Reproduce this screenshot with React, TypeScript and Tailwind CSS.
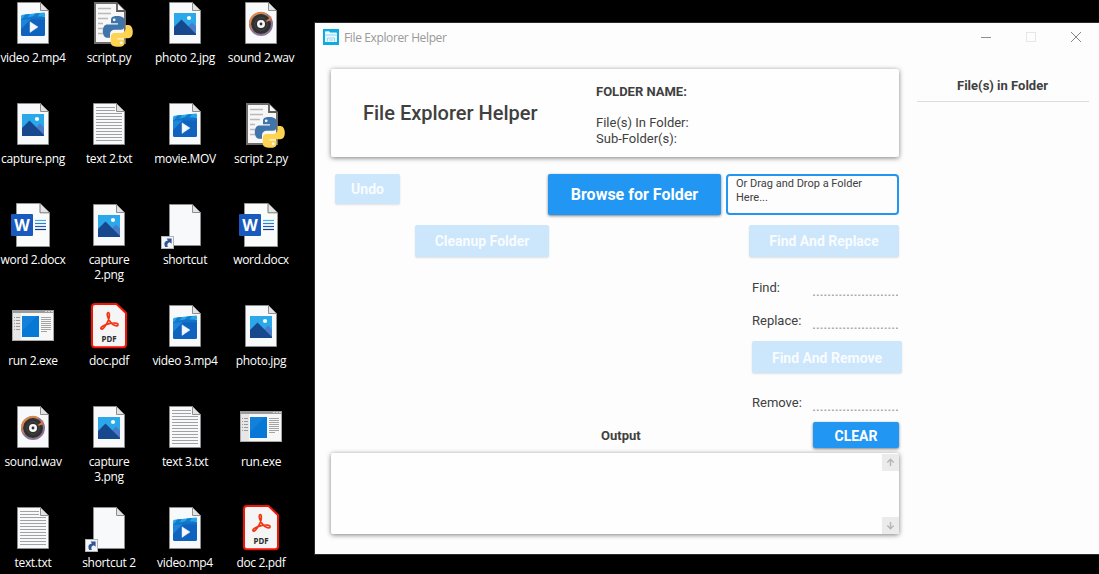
import React from "react";

type Kind = "video" | "python" | "image" | "sound" | "text" | "word" | "shortcut" | "exe" | "pdf";

const files: { kind: Kind; lines: string[] }[] = [
  { kind: "video", lines: ["video 2.mp4"] },
  { kind: "python", lines: ["script.py"] },
  { kind: "image", lines: ["photo 2.jpg"] },
  { kind: "sound", lines: ["sound 2.wav"] },
  { kind: "image", lines: ["capture.png"] },
  { kind: "text", lines: ["text 2.txt"] },
  { kind: "video", lines: ["movie.MOV"] },
  { kind: "python", lines: ["script 2.py"] },
  { kind: "word", lines: ["word 2.docx"] },
  { kind: "image", lines: ["capture", "2.png"] },
  { kind: "shortcut", lines: ["shortcut"] },
  { kind: "word", lines: ["word.docx"] },
  { kind: "exe", lines: ["run 2.exe"] },
  { kind: "pdf", lines: ["doc.pdf"] },
  { kind: "video", lines: ["video 3.mp4"] },
  { kind: "image", lines: ["photo.jpg"] },
  { kind: "sound", lines: ["sound.wav"] },
  { kind: "image", lines: ["capture", "3.png"] },
  { kind: "text", lines: ["text 3.txt"] },
  { kind: "exe", lines: ["run.exe"] },
  { kind: "text", lines: ["text.txt"] },
  { kind: "shortcut", lines: ["shortcut 2"] },
  { kind: "video", lines: ["video.mp4"] },
  { kind: "pdf", lines: ["doc 2.pdf"] },
];

function Page() {
  return (
    <g>
      <path d="M8.5 3.5H31.5L39.5 12V44.5H8.5Z" fill="#f8f9fa" stroke="#8e8e8e" />
      <path d="M31.5 3.5V11.5H39.5Z" fill="#e2e2e3" stroke="#8e8e8e" />
    </g>
  );
}

function Art({ kind }: { kind: Kind }) {
  switch (kind) {
    case "video":
      return (
        <g>
          <Page />
          <path d="M12 17.5Q12 16 13.5 15.8L35 13.6Q36 13.6 36 14.5V17.5L12 20.5Z" fill="#2aa4ea" />
          <path d="M16 15.6L21 15L18 19.8L13 20.4ZM26 14.5L31 14L28 18.5L23 19Z" fill="#0f7fd0" />
          <path d="M12 20L36 18V35.5Q36 37 34.5 37H13.5Q12 37 12 35.5Z" fill="#0f62bd" />
          <path d="M12 20.5L23 19L12 30Z" fill="#1e86d9" />
          <path d="M12 20.3L23 17.6H35Q36 17.6 36 18.6V20.5H14Z" fill="#1273ca" />
          <path d="M21 22.8L29 28L21 33.4Z" fill="#f4f8fc" stroke="#d9e7f5" strokeWidth=".5" />
        </g>
      );
    case "image":
      return (
        <g>
          <Page />
          <rect x="13" y="14" width="22" height="22" fill="#2ba8ea" />
          <path d="M24 31L31 23.5L35 27.5V36H24Z" fill="#4a7cc9" />
          <path d="M13 28L20.5 20.5L35 35V36H13Z" fill="#17478c" />
          <circle cx="28" cy="19" r="2.1" fill="#f5fbff" />
        </g>
      );
    case "text":
      return (
        <g>
          <Page />
          <path
            d="M11 7.5H30M11 10.5H30M11 13.5H37M11 16.5H37M11 19.5H37M11 22.5H37M11 25.5H37M11 28.5H37M11 31.5H37M11 34.5H37M11 37.5H37M11 40.5H37"
            stroke="#a2a2a2"
          />
        </g>
      );
    case "sound":
      return (
        <g>
          <Page />
          <circle cx="24" cy="25" r="11" fill="#303030" stroke="#8b7594" strokeWidth="2" />
          <path d="M13 25A11 11 0 0 1 29.5 15.4" fill="none" stroke="#de8844" strokeWidth="2" />
          <path d="M13 25A11 11 0 0 0 15 31" fill="none" stroke="#b87c69" strokeWidth="2" />
          <path d="M33.5 17.5L32 22M29 22.5L34 19.5" stroke="#d9783a" strokeWidth="2" />
          <circle cx="24" cy="25" r="6.3" fill="none" stroke="#4a4a4a" strokeWidth=".8" />
          <circle cx="24" cy="25" r="4" fill="#f7f7f7" />
          <circle cx="24" cy="25" r="1.4" fill="#333" />
        </g>
      );
    case "python":
      return (
        <g>
          <path d="M10 4H31.5L40 12.5V44H10Z" fill="#f7f7f7" stroke="#706c6c" strokeWidth="2" />
          <path d="M32 4V12H40" fill="#f7f7f7" stroke="#5f5b5b" strokeWidth="1.8" />
          <path
            d="M13 9.5H26M13 14.5H26M13 19.5H23M13 24.5H18M13 29.5H18M13 34.5H18"
            stroke="#b9b9b9"
            strokeWidth="1.6"
          />
          <path
            d="M32 17C26.5 17 26 19.3 26 21V24.2H33V25.4H22.5C19.5 25.4 17.8 28 17.8 32S19.7 38.8 22.2 38.8H25V35.3C25 32.5 27.2 30.8 29.5 30.8H36C38.2 30.8 39.5 29.2 39.5 27V21.5C39.5 18.5 37 17 32 17Z"
            fill="#3f75ab"
          />
          <path
            d="M33.5 47.8C39 47.8 39.5 45.6 39.5 43.8V40.4H32.5V39.2H43.2C46.2 39.2 47.8 36.8 47.8 32.8S46 26 43.5 26H40.6V29.3C40.6 32.2 38.4 34 36 34H29.5C27.3 34 25.8 35.6 25.8 37.8V43.4C25.8 46.3 28.5 47.8 33.5 47.8Z"
            fill="#fdd352"
          />
          <circle cx="29.2" cy="20.8" r="1.4" fill="#f3f7fa" />
          <circle cx="36.2" cy="43.8" r="1.4" fill="#fffaf0" />
        </g>
      );
    case "word":
      return (
        <g>
          <path d="M7.5 2.5H31L40.5 12V45.5H7.5Z" fill="#fafcfb" stroke="#969896" />
          <path d="M31 2.5V11.8H40.5" fill="#e4e4e4" stroke="#777" />
          <rect x="2" y="13" width="22" height="22" rx="1" fill="#185abd" />
          <text x="13" y="29.7" textAnchor="middle" fontFamily="Open Sans" fontWeight="700" fontSize="16" fill="#fff">
            W
          </text>
          <path d="M26 19.5H37" stroke="#48a8e8" strokeWidth="1.2" />
          <path d="M26 22.5H37" stroke="#2b80d2" strokeWidth="1.2" />
          <path d="M26 25.5H37" stroke="#1c5cb8" strokeWidth="1.2" />
          <path d="M26 28.5H37" stroke="#123e83" strokeWidth="1.2" />
        </g>
      );
    case "shortcut":
      return (
        <g>
          <Page />
          <rect x=".5" y="35.5" width="12" height="12" fill="#f4f5f7" stroke="#b0b3b8" />
          <path d="M4.2 46C2.5 42.5 3.6 39.8 7 39.5L5.6 37.5H10.6V42.8L8.8 41.2C6.2 41.8 6 43.6 6.8 46Z" fill="#2e5697" />
        </g>
      );
    case "exe":
      return (
        <g>
          <rect x="3.5" y="8.5" width="41" height="30" fill="#f7f7f7" stroke="#a9a9a9" />
          <rect x="3" y="8" width="42" height="3" fill="#9b9b9b" />
          <path d="M36 9.5H38M39 9.5H41M42 9.5H44" stroke="#d8d8d8" />
          <rect x="4" y="11" width="8" height="27" fill="#e7e7e7" />
          <path
            d="M5 15.5H6M7 15.5H11M5 18.5H6M7 18.5H11M5 21.5H6M7 21.5H11M5 24.5H6M7 24.5H11M5 27.5H6M7 27.5H11"
            stroke="#999"
          />
          <rect x="13" y="14" width="17" height="21" fill="#0878d7" />
          <path d="M13 14H28L13 29Z" fill="#1380da" />
          <path
            d="M32 15.5H42M32 17.5H42M32 19.5H42M32 21.5H42M32 23.5H42M32 25.5H42M32 27.5H42M32 29.5H38"
            stroke="#a3a3a3"
          />
        </g>
      );
    case "pdf":
      return (
        <g>
          <path
            d="M10 2H31.5L41 11V42.5Q41 45.3 38.2 45.3H9.8Q7 45.3 7 42.5V5Q7 2 10 2Z"
            fill="#f5f5f5"
            stroke="#f31405"
            strokeWidth="2"
          />
          <path
            d="M23.2 10.5C21 11 23 17 25.2 19.8C27.6 23.2 32.6 25.3 33 22.8C33.2 20.7 27.8 20.7 24.2 21.6C19.8 22.6 15 25 16 26.8C17.4 28.4 21 23.7 23 19.2C24.8 15.2 24.8 10.8 23.2 10.5Z"
            fill="none"
            stroke="#f23513"
            strokeWidth="1.7"
          />
          <text
            x="24"
            y="39.6"
            textAnchor="middle"
            fontFamily="Open Sans"
            fontWeight="700"
            fontSize="8.6"
            textLength="15"
            lengthAdjust="spacingAndGlyphs"
            fill="#2c2c2c"
          >
            PDF
          </text>
        </g>
      );
  }
}

function DesktopFile({ kind, lines }: { kind: Kind; lines: string[] }) {
  return (
    <div className="flex h-[101px] w-[76px] flex-col items-center">
      <svg width="48" height="48" viewBox="0 0 48 48" className="shrink-0">
        <Art kind={kind} />
      </svg>
      <div className="mt-[3px] text-center font-['Open_Sans',sans-serif] text-[12px] leading-[15px] tracking-[-0.33px] whitespace-nowrap text-white">
        {lines.map((l) => (
          <div key={l}>{l}</div>
        ))}
      </div>
    </div>
  );
}

function Faded({ className, children }: { className: string; children: React.ReactNode }) {
  return (
    <button
      className={`flex items-center justify-center rounded-xs bg-[#cce6fc] text-[14px] font-bold text-[#f9fcff] shadow-[0_1px_2px_rgba(0,0,0,0.12)] ${className}`}
    >
      {children}
    </button>
  );
}

function Field({ label, className }: { label: string; className: string }) {
  return (
    <div className={`flex h-4 w-[146px] items-center justify-between ${className}`}>
      <span className="text-[13px] leading-4">{label}</span>
      <svg width="85" height="16" className="shrink-0">
        <path d="M0 15.2H85" stroke="#b0b0b0" strokeWidth="1.6" strokeDasharray="2.1 1.67" />
      </svg>
    </div>
  );
}

function ScrollArrow({ down = false }: { down?: boolean }) {
  return (
    <div className="flex h-[17px] w-[17px] items-center justify-center bg-[#ebebeb]">
      <svg width="9" height="9" viewBox="0 0 9 9" className={down ? "rotate-180" : ""}>
        <path d="M1.3 4.5L4.5 1.3L7.7 4.5M4.5 1.5V8" fill="none" stroke="#b5b5b5" strokeWidth="1.4" />
      </svg>
    </div>
  );
}

export default function App() {
  return (
    <div className="flex h-[574px] w-[1099px] overflow-hidden bg-black">
      <div className="-mt-px -ml-[5px] grid w-[304px] shrink-0 grid-cols-[repeat(4,76px)] content-start">
        {files.map((f, i) => (
          <DesktopFile key={i} {...f} />
        ))}
      </div>

      <main className="mt-[22px] ml-[15px] flex h-[533px] w-[785px] shrink-0 flex-col border-y border-l border-[#2b2b2b] bg-[#fdfdfd] font-[Roboto,sans-serif] text-[#404040]">
        <header className="flex h-[29px] shrink-0 items-center pr-[18px] pl-2">
          <svg width="16" height="16" viewBox="0 0 16 16" className="-mt-px">
            <rect width="16" height="16" fill="#0eaae1" />
            <path d="M2 4V3Q2 2.2 3 2.2H6L7.3 3.5H13Q14 3.5 14 4.5V13H2Z" fill="#e9f8fd" />
            <path d="M2 6H14M4.5 12.5V9H11.5V12.5M6 11H10" stroke="#7dd1ef" fill="none" strokeWidth=".8" />
          </svg>
          <span className="ml-[5px] font-['Open_Sans',sans-serif] text-[12px] tracking-[-0.37px] text-[#999]">
            File Explorer Helper
          </span>
          <div className="-mt-px ml-auto flex items-center gap-[35px]">
            <svg width="10" height="12" viewBox="0 0 10 12">
              <path d="M0 6.5H10" stroke="#8e8e8e" />
            </svg>
            <svg width="10" height="12" viewBox="0 0 10 12">
              <rect x=".5" y="1.5" width="9" height="9" fill="none" stroke="#e6e6e6" />
            </svg>
            <svg width="10" height="12" viewBox="0 0 10 12">
              <path d="M0 1L10 11M10 1L0 11" stroke="#858585" />
            </svg>
          </div>
        </header>

        <div className="flex min-h-0 flex-1 pl-4">
          <div className="w-[571px] shrink-0 pt-[17px]">
            <section className="flex h-[88px] w-[568px] rounded-xs bg-[#fefefe] shadow-[0_1px_5px_rgba(0,0,0,0.5)]">
              <h1 className="w-[265px] pl-8 text-[20px] leading-[88px] font-medium">File Explorer Helper</h1>
              <div className="pt-[15px] text-[13px] leading-4">
                <p className="font-bold">FOLDER NAME:</p>
                <p className="mt-[15px]">File(s) In Folder:</p>
                <p>Sub-Folder(s):</p>
              </div>
            </section>

            <div className="mt-[17px] flex w-[568px] items-start pl-1">
              <Faded className="h-[30px] w-[65px]">Undo</Faded>
              <button className="ml-[148px] h-[41px] w-[173px] rounded-xs bg-[#2196f3] pt-px text-[16px] font-bold text-white shadow-[0_1px_3px_rgba(0,0,0,0.5)]">
                Browse for Folder
              </button>
              <div className="ml-[5px] h-[41px] w-[173px] rounded border-2 border-[#2196f3] pt-px pl-2 text-[11px] leading-[14px]">
                Or Drag and Drop a Folder
                <br />
                Here...
              </div>
            </div>

            <div className="mt-[10px] flex w-[568px] justify-between pl-[84px]">
              <Faded className="h-8 w-[134px]">Cleanup Folder</Faded>
              <Faded className="h-8 w-[150px]">Find And Replace</Faded>
            </div>

            <div className="flex flex-col pl-[421px]">
              <Field label="Find:" className="mt-[23px]" />
              <Field label="Replace:" className="mt-[17px]" />
              <Faded className="mt-[12px] h-8 w-[150px] pt-0.5">Find And Remove</Faded>
              <Field label="Remove:" className="mt-[22px]" />
            </div>

            <div className="mt-[11px] flex h-[26px] w-[568px] items-center justify-between pl-[270px]">
              <h2 className="pt-0.5 text-[13px] font-bold">Output</h2>
              <button className="h-[26px] w-[86px] rounded-xs bg-[#2196f3] pt-0.5 text-[14px] font-bold text-white shadow-[0_1px_3px_rgba(0,0,0,0.5)]">
                CLEAR
              </button>
            </div>

            <div className="mt-[5px] flex h-[81px] w-[568px] flex-col items-end justify-between rounded-xs bg-[#fefefe] pt-px shadow-[0_1px_5px_rgba(0,0,0,0.5)]">
              <ScrollArrow />
              <ScrollArrow down />
            </div>
          </div>

          <aside className="ml-[15px] w-[172px] pt-[17px]">
            <h2 className="h-[33px] border-b border-[#dcdcdc] pr-px text-center text-[13px] leading-[33px] font-bold">
              File(s) in Folder
            </h2>
          </aside>
        </div>
      </main>
    </div>
  );
}
